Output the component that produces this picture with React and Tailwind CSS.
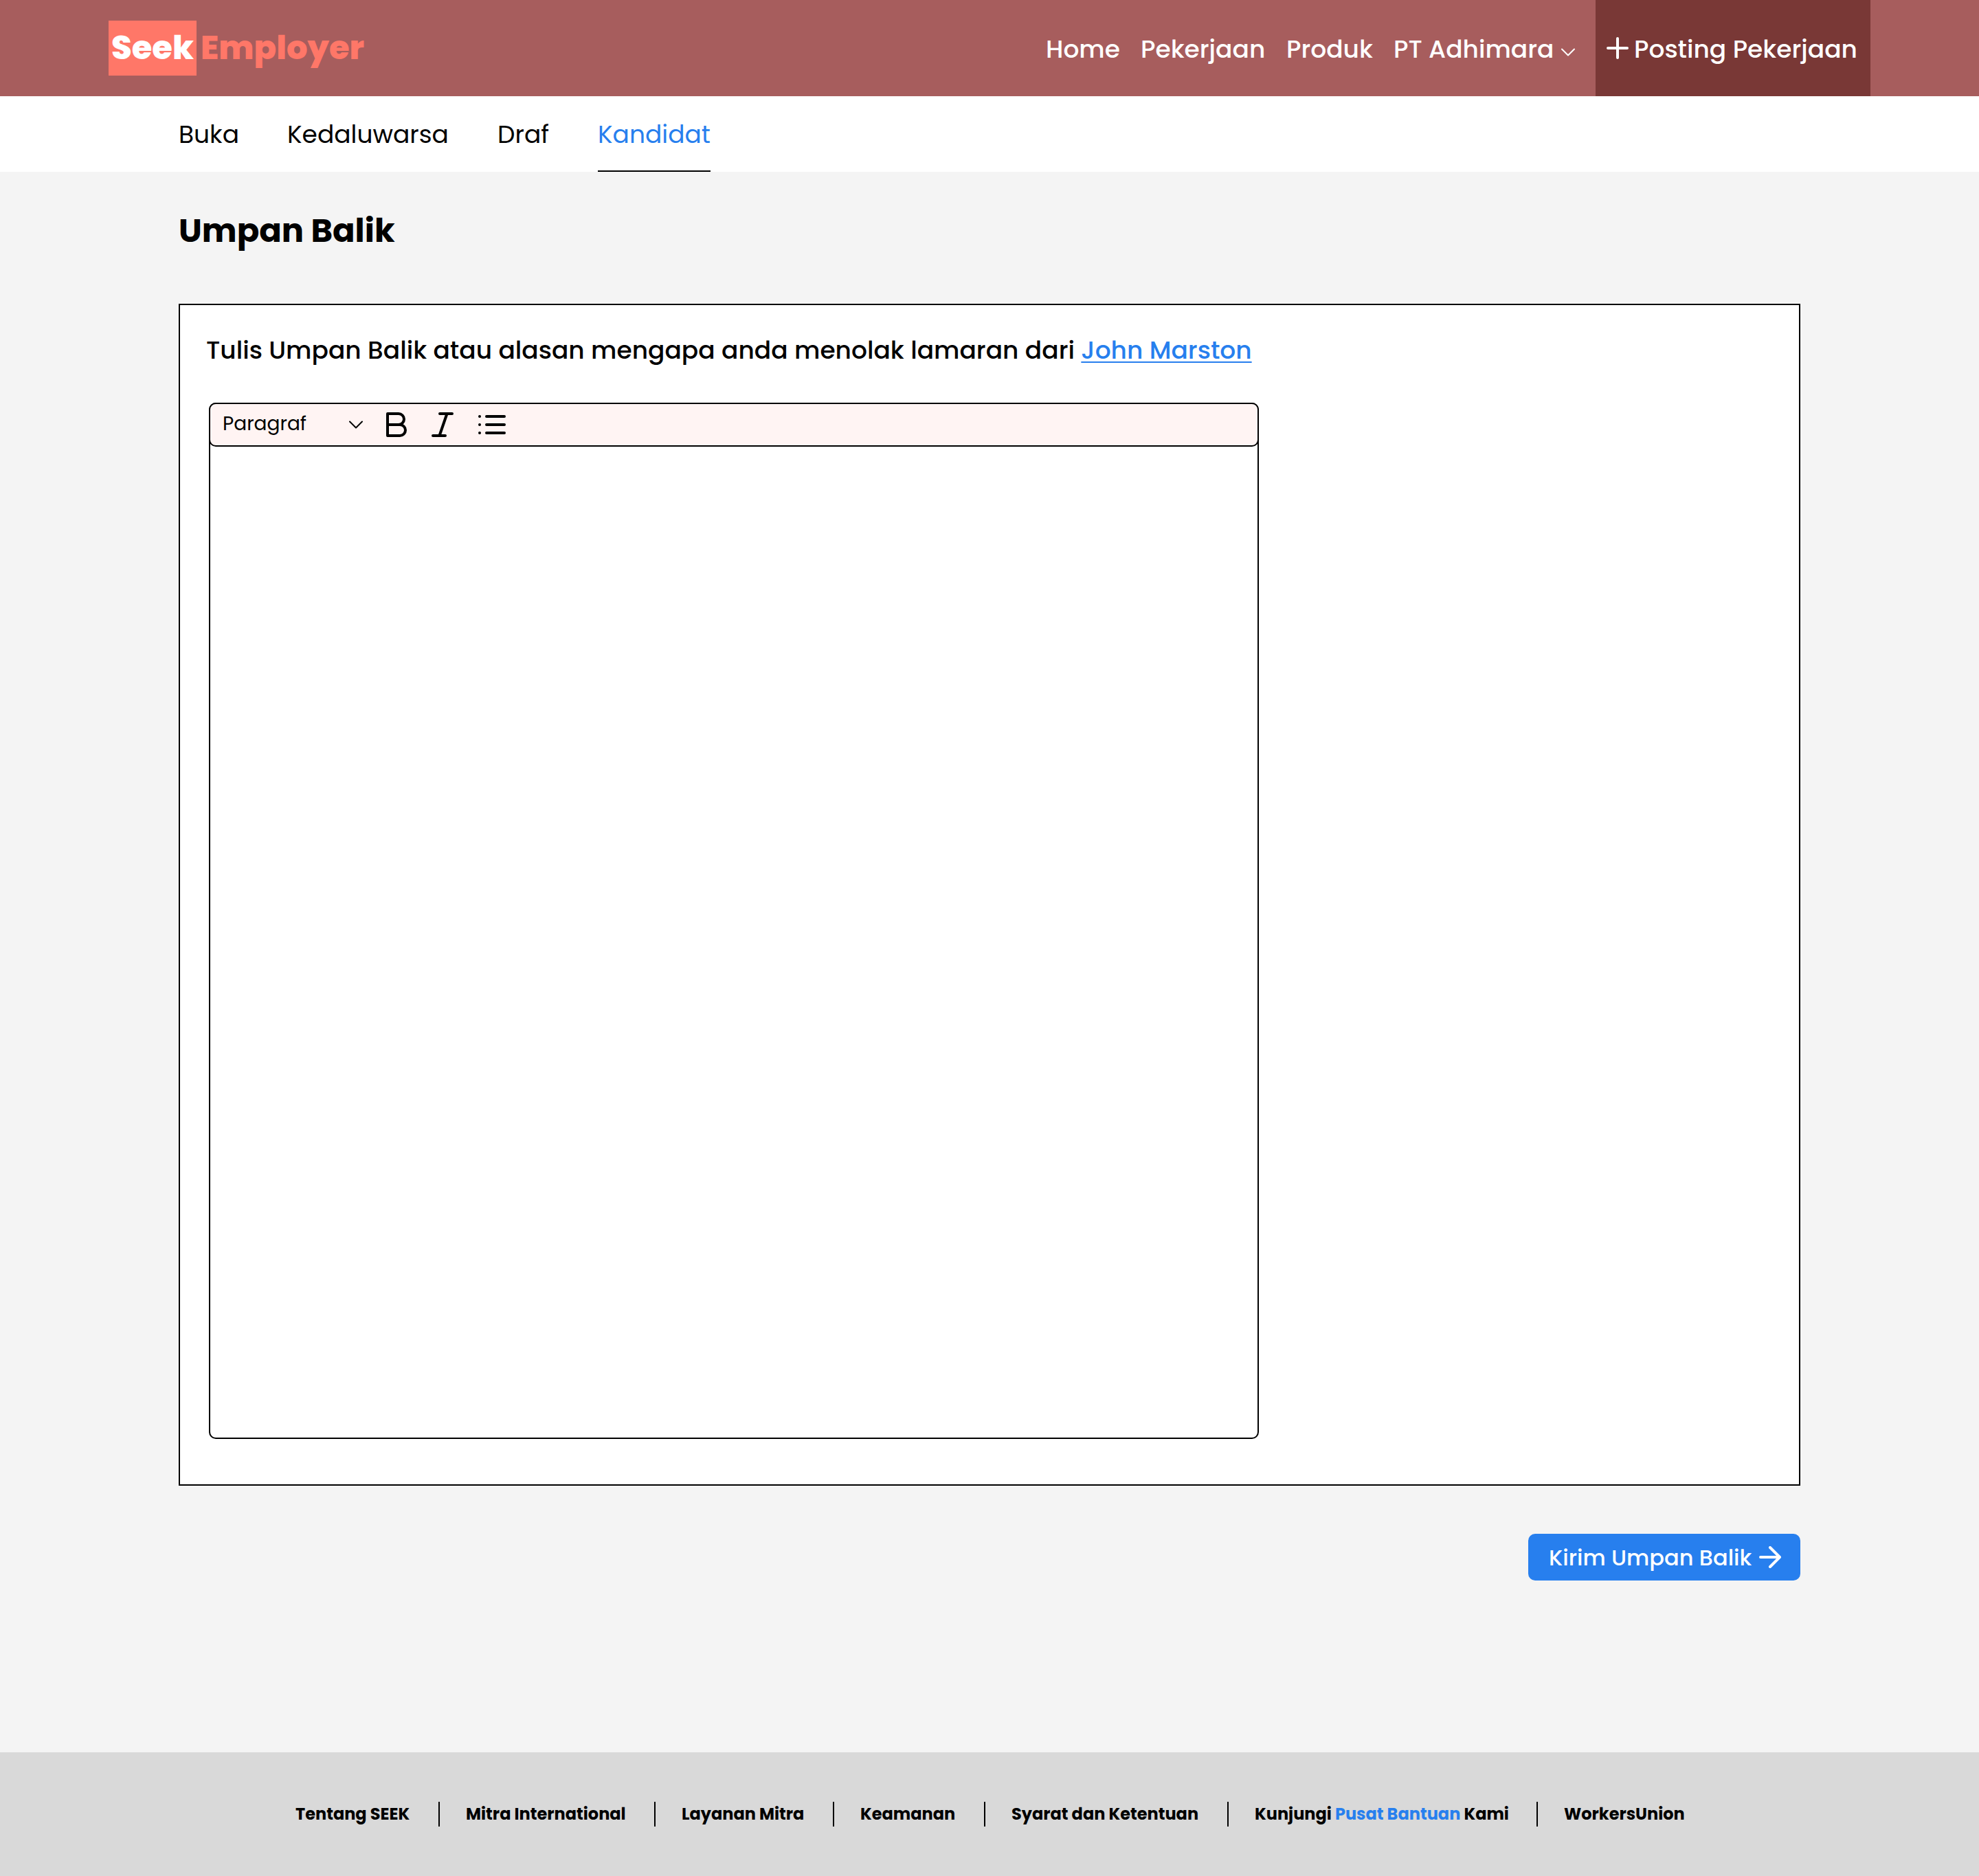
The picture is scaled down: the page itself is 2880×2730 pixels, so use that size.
import React from "react";

const footerItems = [
  { label: "Tentang SEEK", width: "w-[168px]" },
  { label: "Mitra International", width: "w-[234px]" },
  { label: "Layanan Mitra", width: "w-[180px]" },
  { label: "Keamanan", width: "w-[140px]" },
  { label: "Syarat dan Ketentuan", width: "w-[274px]" },
];

function Chevron({ className }) {
  return (
    <svg viewBox="0 0 20 12" className={className} fill="none" stroke="currentColor" strokeWidth="2" strokeLinecap="round" strokeLinejoin="round">
      <path d="M1 1.5 10 10.5 19 1.5" />
    </svg>
  );
}

function Divider() {
  return <span className="mr-[38px] ml-10 h-9 w-0.5 shrink-0 bg-black" />;
}

function Header() {
  return (
    <header className="flex h-[140px] shrink-0 items-center bg-[#a75d5d] px-[158px] text-white">
      <div className="flex items-center text-[48px] leading-[80px] font-extrabold">
        <div className="h-20 w-32 bg-[#ff7768] pl-1">Seek</div>
        <span className="ml-1.5 text-[#ff7768]">Employer</span>
      </div>
      <nav className="ml-auto flex items-center gap-[30px] pt-1 pr-[30px] text-[36px] leading-[54px] font-medium">
        <a className="w-[108px]">Home</a>
        <a className="w-[182px]">Pekerjaan</a>
        <a className="w-[126px]">Produk</a>
        <a className="flex items-center">
          <span className="w-[234px]">PT Adhimara</span>
          <Chevron className="mt-2 ml-2.5 h-3 w-5" />
        </a>
      </nav>
      <button className="flex h-full w-[400px] items-center bg-[#793836] pl-4 text-[36px] leading-[54px] font-medium">
        <svg viewBox="0 0 32 32" className="h-8 w-8" fill="none" stroke="currentColor" strokeWidth="4" strokeLinecap="round">
          <path d="M2 16H30M16 2V30" />
        </svg>
        <span className="ml-2 pt-1">Posting Pekerjaan</span>
      </button>
    </header>
  );
}

function Tabs() {
  return (
    <div className="flex h-[110px] shrink-0 gap-[70px] bg-white pl-[260px] text-[36px] leading-[112px]">
      <a className="w-[88px]">Buka</a>
      <a className="w-[236px]">Kedaluwarsa</a>
      <a className="w-[76px]">Draf</a>
      <a className="h-[110px] w-[164px] border-b-2 border-black text-[#277fee]">Kandidat</a>
    </div>
  );
}

function Editor() {
  return (
    <div className="mt-[49px] ml-1 h-[1508px] w-[1528px] rounded-[10px] border-2 border-black bg-white">
      <div className="-mx-0.5 -mt-0.5 flex h-16 items-center rounded-[10px] border-2 border-black bg-[#fff4f3] pl-[18px]">
        <span className="-mt-0.5 w-[184px] text-[28px] leading-[42px]">Paragraf</span>
        <Chevron className="h-3 w-5" />
        <svg viewBox="0 0 32 36" className="ml-[34px] h-9 w-8" fill="none" stroke="currentColor" strokeWidth="4" strokeLinecap="round" strokeLinejoin="round">
          <path d="M2 2H18A8 8 0 0 1 18 18H2ZM2 18H20A8 8 0 0 1 20 34H2Z" />
        </svg>
        <svg viewBox="0 0 32 36" className="ml-[34px] h-9 w-8" fill="none" stroke="currentColor" strokeWidth="4" strokeLinecap="round">
          <path d="M12 2H30M2 34H20M22.5 2 11.5 34" />
        </svg>
        <svg viewBox="0 0 40 28" className="ml-9 h-7 w-10" fill="none" stroke="currentColor" strokeWidth="4" strokeLinecap="round">
          <path d="M2 2h.01M2 14h.01M2 26h.01M12 2H38M12 14H38M12 26H38" />
        </svg>
      </div>
    </div>
  );
}

export default function App() {
  return (
    <div className="flex h-[2730px] w-[2880px] flex-col bg-[#f4f4f4] font-['Poppins',Inter,sans-serif] whitespace-nowrap text-black">
      <Header />
      <Tabs />
      <main className="h-[2300px] shrink-0 px-[260px] pt-12">
        <h1 className="text-[48px] leading-[76px] font-bold">Umpan Balik</h1>
        <section className="mt-[68px] h-[1720px] border-2 border-black bg-white pt-[39px] pl-[38px]">
          <p className="text-[36px] leading-[54px] font-medium">
            Tulis Umpan Balik atau alasan mengapa anda menolak lamaran dari{" "}
            <a className="text-[#277fee] underline decoration-2 underline-offset-[3.5px] [text-decoration-skip-ink:none]">John Marston</a>
          </p>
          <Editor />
        </section>
        <div className="mt-[70px] flex justify-end">
          <button className="flex h-[68px] w-[396px] items-center rounded-[10px] bg-[#277fee] pl-[30px] text-[32px] leading-[48px] font-medium text-white">
            <span className="w-[306px] pt-0.5 text-left">Kirim Umpan Balik</span>
            <svg viewBox="0 0 32 32" className="h-8 w-8" fill="none" stroke="currentColor" strokeWidth="4" strokeLinecap="round" strokeLinejoin="round">
              <path d="M2 16H30M16 2 30 16 16 30" />
            </svg>
          </button>
        </div>
      </main>
      <footer className="flex h-[180px] shrink-0 items-center bg-[#d9d9d9] pl-[430px] text-[24px] leading-9 font-bold">
        {footerItems.map((item) => (
          <React.Fragment key={item.label}>
            <span className={"shrink-0 " + item.width}>{item.label}</span>
            <Divider />
          </React.Fragment>
        ))}
        <span className="w-[370px] shrink-0">
          Kunjungi <span className="text-[#277fee]">Pusat Bantuan</span> Kami
        </span>
        <Divider />
        <span>WorkersUnion</span>
      </footer>
    </div>
  );
}
